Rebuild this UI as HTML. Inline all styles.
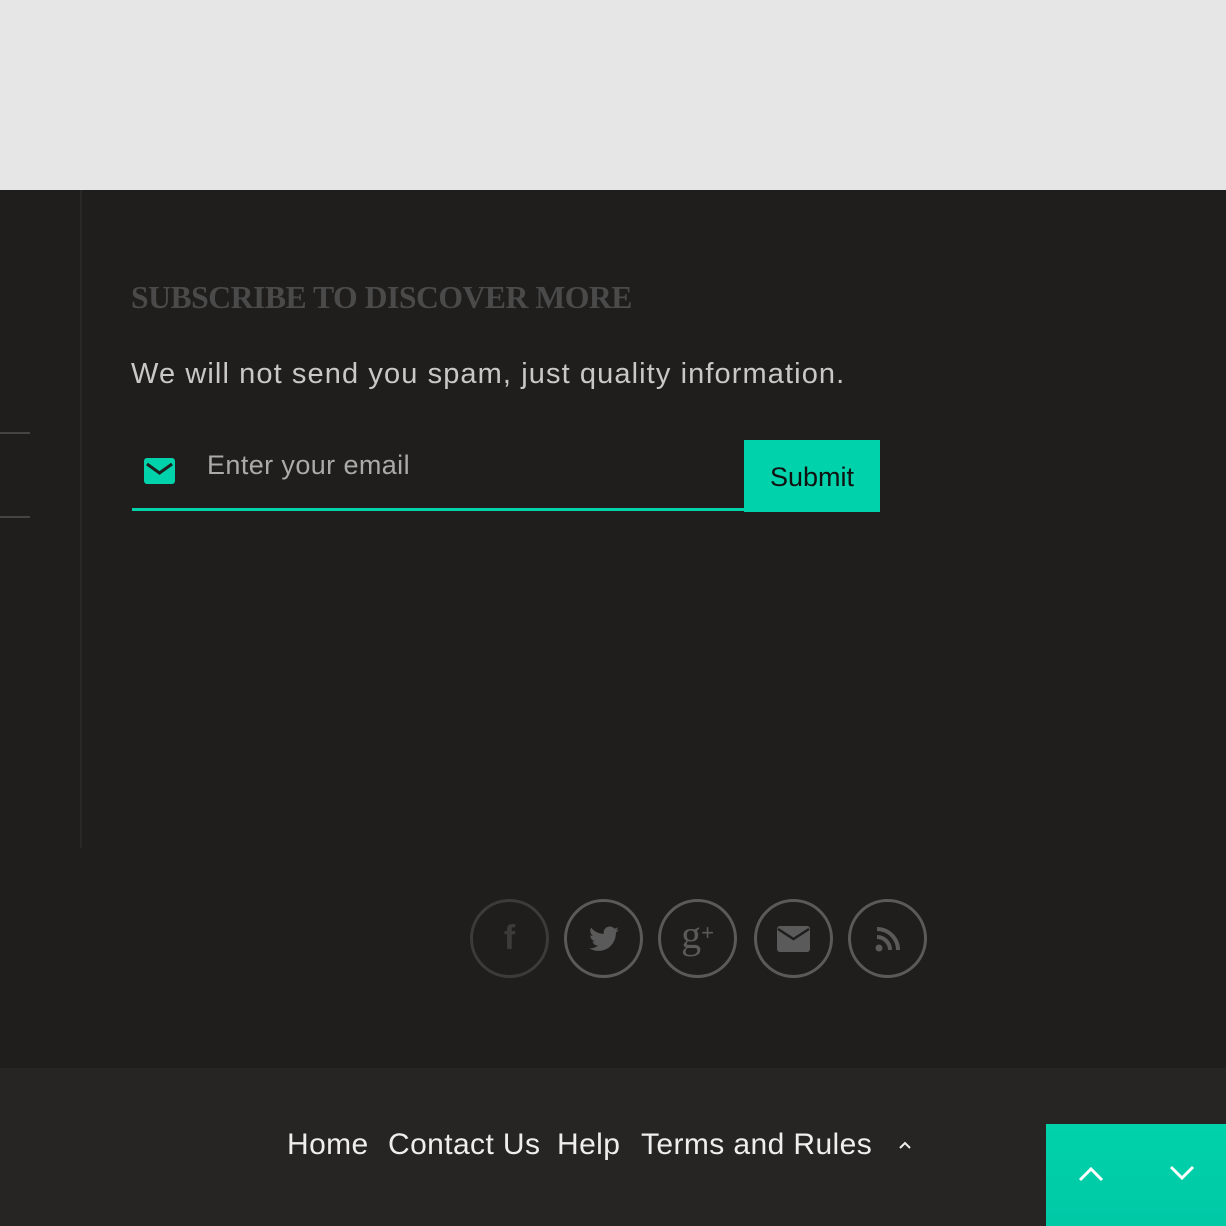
<!DOCTYPE html>
<html><head><style>
*{margin:0;padding:0;box-sizing:border-box}
body{width:1226px;height:1226px;position:relative;background:#1f1e1d;font-family:"Liberation Sans",sans-serif;overflow:hidden}
.a{position:absolute}
.c{position:absolute;top:899px;width:79px;height:79px;border:3px solid #5a5a5a;border-radius:50%;display:flex;align-items:center;justify-content:center}
.f{position:absolute;top:1128px;font-size:30px;color:#eee;white-space:nowrap;letter-spacing:0.4px}
</style></head><body>
<div class="a" style="left:0;top:0;width:1226px;height:190px;background:#e6e6e6"></div>
<div class="a" style="left:80px;top:190px;width:2px;height:658px;background:#292827"></div>
<div class="a" style="left:0;top:432px;width:30px;height:2px;background:#444"></div>
<div class="a" style="left:0;top:516px;width:30px;height:2px;background:#444"></div>
<div class="a" style="left:131px;top:279px;font-family:'Liberation Serif',serif;font-weight:bold;font-size:32px;color:#4a4a4a;white-space:nowrap;transform:scaleX(0.99);transform-origin:left;letter-spacing:-0.5px">SUBSCRIBE TO DISCOVER MORE</div>
<div class="a" style="left:131px;top:358px;font-size:29px;color:#c8c8c8;white-space:nowrap;letter-spacing:1.1px">We will not send you spam, just quality information.</div>
<svg class="a" style="left:144px;top:458px" width="31" height="26" viewBox="0 0 31 26"><rect x="0" y="0" width="31" height="26" rx="3" fill="#00d2ab"/><path d="M3 6 L15.5 15 L28 6" stroke="#1f1e1d" stroke-width="3" fill="none"/></svg>
<div class="a" style="left:207px;top:450px;font-size:27px;color:#aaa;white-space:nowrap;letter-spacing:0.4px">Enter your email</div>
<div class="a" style="left:132px;top:508px;width:612px;height:3px;background:#00d2ab"></div>
<div class="a" style="left:744px;top:440px;width:136px;height:72px;background:#00d2ab;color:#111;font-size:27px;display:flex;align-items:center;justify-content:center;padding-top:2px">Submit</div>
<div class="c" style="left:470px;border-color:#3c3b3a"><span style="font:bold 34px 'Liberation Sans';color:#3c3b3a">f</span></div>
<div class="c" style="left:564px"><svg width="30" height="26" viewBox="0 0 24 20"><path fill="#5a5a5a" d="M24 2.4c-.9.4-1.8.6-2.8.8 1-.6 1.8-1.6 2.2-2.7-1 .6-2 1-3.1 1.2C19.3.6 18 0 16.6 0c-2.7 0-4.9 2.2-4.9 4.9 0 .4 0 .8.1 1.1C7.7 5.8 4.1 3.9 1.7.9c-.4.7-.7 1.6-.7 2.5 0 1.7.9 3.2 2.2 4.1-.8 0-1.6-.2-2.2-.6v.1c0 2.4 1.7 4.4 3.9 4.8-.4.1-.8.2-1.3.2-.3 0-.6 0-.9-.1.6 2 2.4 3.4 4.6 3.4-1.7 1.3-3.8 2.1-6.1 2.1-.4 0-.8 0-1.2-.1 2.2 1.4 4.8 2.2 7.5 2.2 9.1 0 14-7.5 14-14v-.6c1-.7 1.8-1.6 2.5-2.5z"/></svg></div>
<div class="c" style="left:658px"><span style="font:40px 'Liberation Serif';color:#5a5a5a;position:relative;top:-4px">g</span><span style="font:22px 'Liberation Sans';color:#5a5a5a;position:relative;top:-6px">+</span></div>
<div class="c" style="left:754px"><svg width="33" height="26" viewBox="0 0 33 26"><rect width="33" height="26" rx="3" fill="#5a5a5a"/><path d="M1 3 L16.5 13 L32 3" stroke="#1f1e1d" stroke-width="2.5" fill="none"/></svg></div>
<div class="c" style="left:848px"><svg width="26" height="26" viewBox="0 0 26 26"><circle cx="4" cy="22" r="3.5" fill="#5a5a5a"/><path d="M2 11a13 13 0 0 1 13 13" stroke="#5a5a5a" stroke-width="4" fill="none"/><path d="M2 3a21 21 0 0 1 21 21" stroke="#5a5a5a" stroke-width="4" fill="none"/></svg></div>
<div class="a" style="left:0;top:1068px;width:1226px;height:158px;background:#262524"></div>
<div class="f" style="left:287px">Home</div>
<div class="f" style="left:388px">Contact Us</div>
<div class="f" style="left:557px">Help</div>
<div class="f" style="left:641px">Terms and Rules</div>
<svg class="a" style="left:898px;top:1140px" width="14" height="10"><path d="M2 8 L7 3 L12 8" stroke="#eee" stroke-width="2" fill="none"/></svg>
<div class="a" style="left:1046px;top:1124px;width:180px;height:102px;background:linear-gradient(#00d2ab,#00c9a6)"></div>
<svg class="a" style="left:1078px;top:1165px" width="26" height="18"><path d="M2 15 L13 4 L24 15" stroke="#fff" stroke-width="3" fill="none"/></svg>
<svg class="a" style="left:1169px;top:1164px" width="26" height="18"><path d="M2 3 L13 14 L24 3" stroke="#fff" stroke-width="3" fill="none"/></svg>
</body></html>
